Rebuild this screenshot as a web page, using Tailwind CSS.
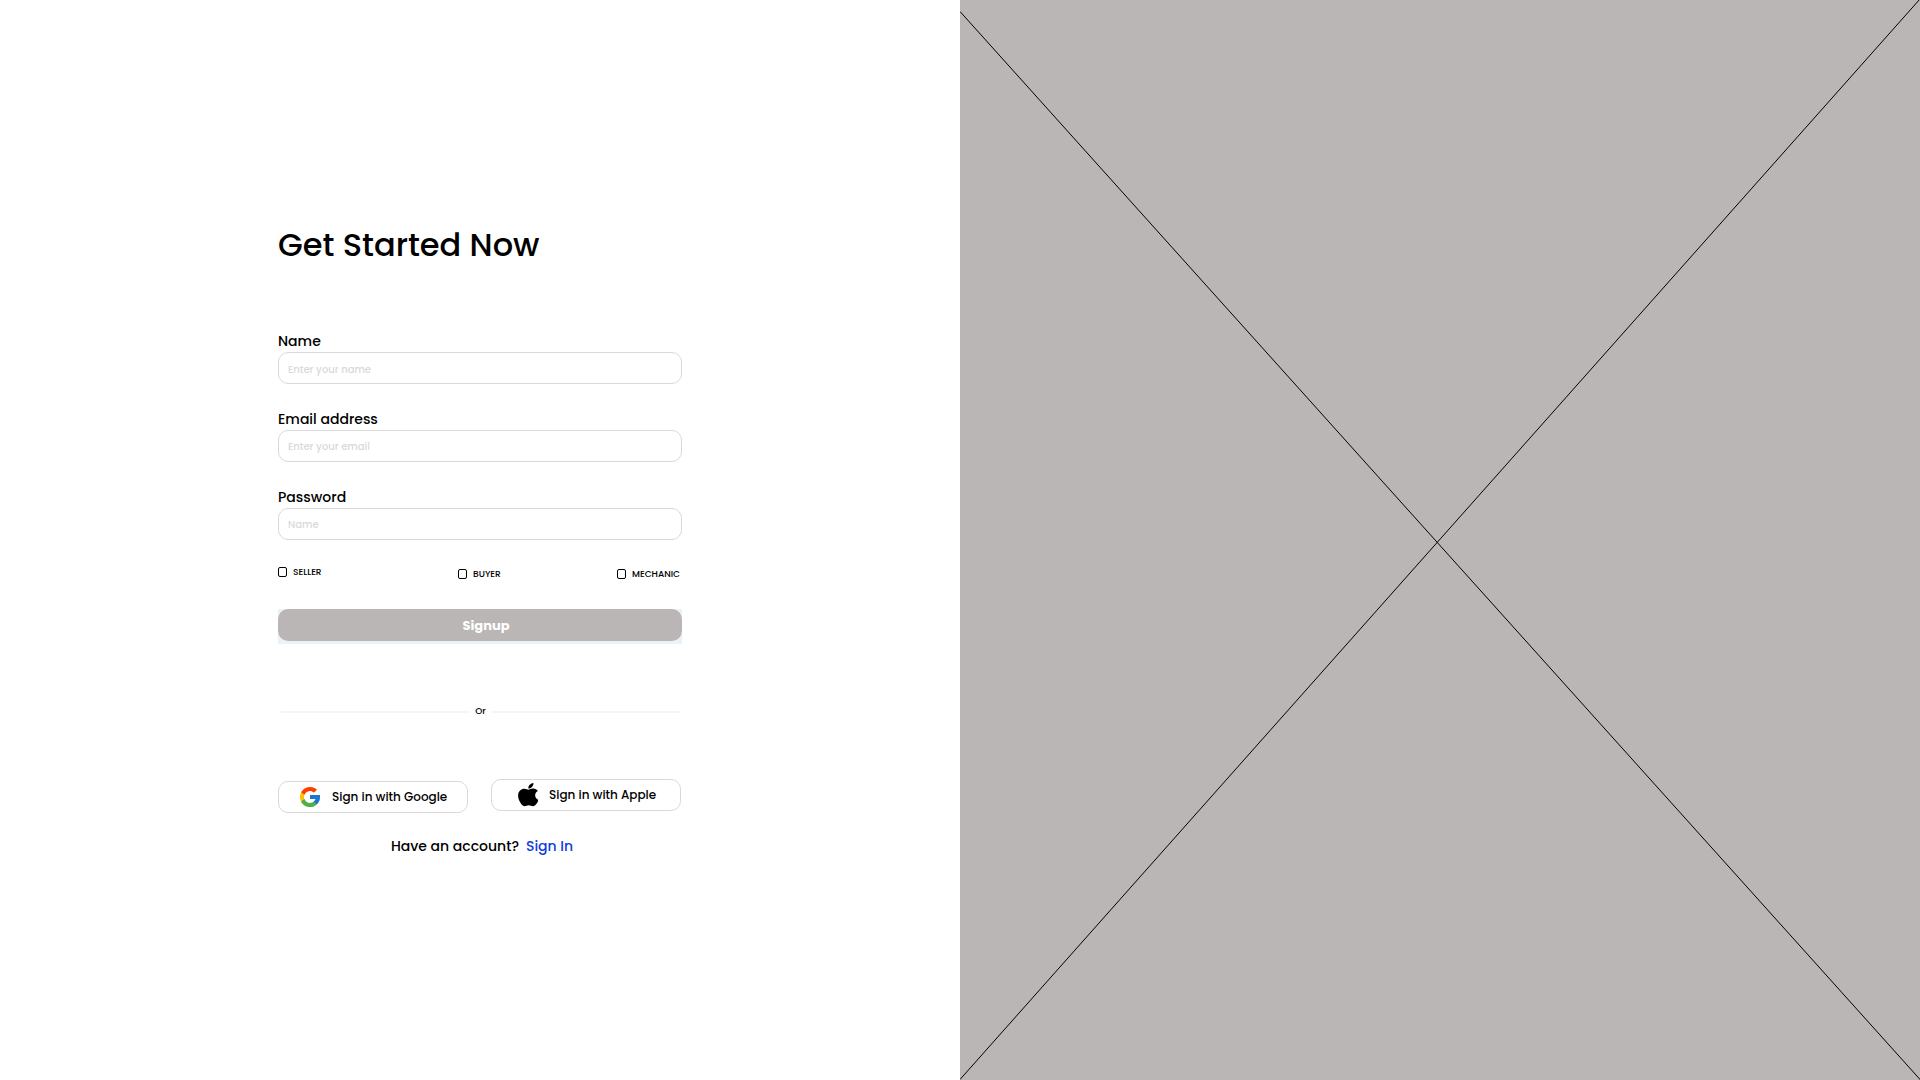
<!DOCTYPE html>
<html lang="en">
<head>
<meta charset="utf-8">
<meta name="viewport" content="width=device-width, initial-scale=1">
<title>Get Started Now</title>
<script src="https://cdn.jsdelivr.net/npm/@tailwindcss/browser@4"></script>
</head>
<body class="bg-white font-['Poppins','Inter',sans-serif] font-medium text-black">
<div class="grid min-h-screen grid-cols-2">
  <main class="flex flex-col items-center justify-center">
    <div class="w-full max-w-[404px]">
      <h1 class="text-[32px] leading-[48px]">Get Started Now</h1>

      <form class="mt-[63px]">
        <div class="flex flex-col gap-[26px]">
          <div class="flex flex-col gap-0.5">
            <label for="name" class="text-sm leading-[18px]">Name</label>
            <input id="name" type="text" placeholder="Enter your name" class="h-8 rounded-[10px] border border-[#d9d9d9] px-[9px] pt-1 text-[10px] placeholder:text-[#d9d9d9]">
          </div>
          <div class="flex flex-col gap-0.5">
            <label for="email" class="text-sm leading-[18px]">Email address</label>
            <input id="email" type="email" placeholder="Enter your email" class="h-8 rounded-[10px] border border-[#d9d9d9] px-[9px] pt-0.5 text-[10px] placeholder:text-[#d9d9d9]">
          </div>
          <div class="flex flex-col gap-0.5">
            <label for="password" class="text-sm leading-[18px]">Password</label>
            <input id="password" type="password" placeholder="Name" class="h-8 rounded-[10px] border border-[#d9d9d9] px-[9px] pt-0.5 text-[10px] placeholder:text-[#d9d9d9]">
          </div>
        </div>

        <div class="mt-[27px] grid h-3 grid-cols-[180px_159px_auto] text-[9px] leading-[10px]">
          <label class="flex items-center gap-1.5 self-start"><input type="checkbox" class="h-2.5 w-[9px] appearance-none rounded-[2px] border border-black checked:bg-black">SELLER</label>
          <label class="flex items-center gap-1.5 self-end"><input type="checkbox" class="h-2.5 w-[9px] appearance-none rounded-[2px] border border-black checked:bg-black">BUYER</label>
          <label class="flex items-center gap-1.5 self-end"><input type="checkbox" class="h-2.5 w-[9px] appearance-none rounded-[2px] border border-black checked:bg-black">MECHANIC</label>
        </div>

        <div class="mt-[30px] bg-[#ebf2f7] pb-[3px]">
          <button type="submit" class="block h-8 w-full rounded-[10px] bg-[#bab6b5] pt-0.5 pl-3 text-[13px] font-bold text-white">Signup</button>
        </div>
      </form>

      <div class="mt-[62px] flex h-3 items-center gap-[5px] pr-0.5 pl-[3px] text-[9px] leading-3">
        <span class="h-0.5 flex-1 bg-[#f5f5f5]"></span>
        <span class="pb-0.5">Or</span>
        <span class="h-0.5 flex-1 bg-[#f5f5f5]"></span>
      </div>

      <div class="mt-[61px] flex h-[34px] justify-between pr-px text-xs">
        <button type="button" class="flex h-8 w-[190px] items-center gap-3 self-end rounded-[10px] border border-[#d9d9d9] pl-[21px]">
          <svg class="size-5" viewBox="4 4 40 40" aria-hidden="true">
            <path fill="#FFC107" d="M43.6 20.1H42V20H24v8h11.3C33.7 32.7 29.2 36 24 36c-6.6 0-12-5.4-12-12s5.4-12 12-12c3.1 0 5.8 1.2 8 3l5.7-5.7C34 6.1 29.3 4 24 4 13 4 4 13 4 24s9 20 20 20 20-9 20-20c0-1.3-.1-2.7-.4-3.9z"/>
            <path fill="#FF3D00" d="M6.3 14.7l6.6 4.8C14.7 15.1 19 12 24 12c3.1 0 5.8 1.2 8 3l5.7-5.7C34 6.1 29.3 4 24 4 16.3 4 9.7 8.3 6.3 14.7z"/>
            <path fill="#4CAF50" d="M24 44c5.2 0 9.9-2 13.4-5.2l-6.2-5.2C29.2 35.1 26.7 36 24 36c-5.2 0-9.6-3.3-11.3-8l-6.5 5C9.5 39.6 16.2 44 24 44z"/>
            <path fill="#1976D2" d="M43.6 20.1H42V20H24v8h11.3c-.8 2.2-2.2 4.2-4.1 5.6l6.2 5.2C37 39.2 44 34 44 24c0-1.3-.1-2.7-.4-3.9z"/>
          </svg>
          Sign in with Google
        </button>
        <button type="button" class="flex h-8 w-[190px] items-center gap-[11px] self-start rounded-[10px] border border-[#d9d9d9] pl-[26px]">
          <svg class="h-6 w-5" viewBox="0 0 384 512" preserveAspectRatio="none" aria-hidden="true">
            <path transform="translate(-2 -34) scale(1.04 1.1)" d="M318.7 268.7c-.2-36.7 16.4-64.4 50-84.8-18.8-26.9-47.2-41.7-84.7-44.6-35.5-2.8-74.3 20.7-88.5 20.7-15 0-49.4-19.7-76.4-19.7C63.3 141.2 4 184.8 4 273.5q0 39.3 14.4 81.2c12.8 36.7 59 126.7 107.2 125.2 25.2-.6 43-17.9 75.8-17.9 31.8 0 48.3 17.9 76.4 17.9 48.6-.7 90.4-82.5 102.6-119.3-65.2-30.7-61.7-90-61.7-91.9zm-56.6-164.2c27.3-32.4 24.8-61.9 24-72.5-24.1 1.4-52 16.4-67.9 34.9-17.5 19.8-27.8 44.3-25.6 71.9 26.1 2 49.9-11.4 69.5-34.3z"/>
          </svg>
          Sign in with Apple
        </button>
      </div>

      <p class="mt-5 flex justify-center gap-[7px] pl-1 text-sm leading-[26px]">Have an account? <a href="#" class="text-[#0f3dde]">Sign In</a></p>
    </div>
  </main>

  <aside class="relative bg-[#bab6b5]">
    <svg class="absolute inset-0 size-full" viewBox="0 0 960 1080" preserveAspectRatio="none" stroke="#000" aria-hidden="true">
      <path d="M0 11.5L960.5 1080M0 1079.5L960 -1" fill="none" vector-effect="non-scaling-stroke"/>
    </svg>
  </aside>
</div>
</body>
</html>
